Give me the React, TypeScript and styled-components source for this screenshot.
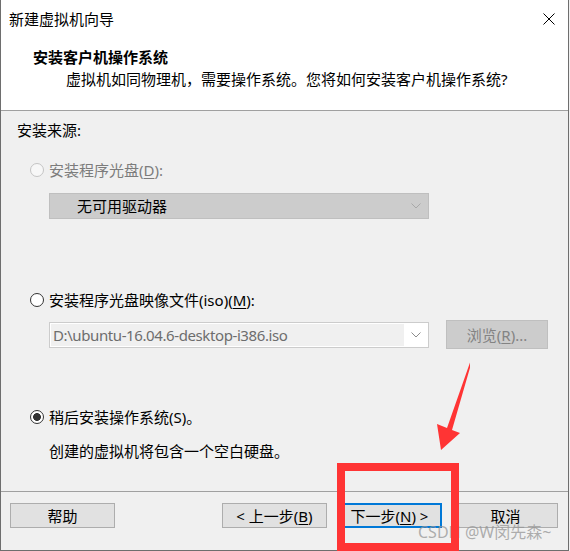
import styled, { createGlobalStyle } from "styled-components";

const GlobalStyle = createGlobalStyle`
  html, body {
    margin: 0;
    padding: 0;
    background: #f0f0f0;
  }
  body {
    font-family: "Noto Sans", "Noto Sans CJK SC", sans-serif;
    font-size: 15px;
    color: #000;
  }
`;

const Chevron = ({ color = "#a8a8a8" }: { color?: string }) => (
  <svg width="10" height="6" viewBox="0 0 10 6">
    <polyline points="0.5,0.5 5,5 9.5,0.5" fill="none" stroke={color} strokeWidth="1" />
  </svg>
);

const CloseIcon = () => (
  <svg width="12" height="12" viewBox="0 0 12 12">
    <line x1="0.5" y1="0.5" x2="11.5" y2="11.5" stroke="#000" strokeWidth="1" />
    <line x1="11.5" y1="0.5" x2="0.5" y2="11.5" stroke="#000" strokeWidth="1" />
  </svg>
);

const App = () => {
  return (
    <>
      <GlobalStyle />
      <Window>
        <Top>
          <TitleBar>
            <span>新建虚拟机向导</span>
            <CloseIcon />
          </TitleBar>
          <HeaderTitle>安装客户机操作系统</HeaderTitle>
          <Subtitle>虚拟机如同物理机，需要操作系统。您将如何安装客户机操作系统?</Subtitle>
        </Top>

        <Body>
          <Line>安装来源:</Line>

          <RadioRow $top={20} $disabled>
            <Radio $disabled />
            <span>
              安装程序光盘(<Key>D</Key>):
            </span>
          </RadioRow>
          <Dropdown>
            <span>无可用驱动器</span>
            <Chevron />
          </Dropdown>

          <RadioRow $top={71}>
            <Radio />
            <span>
              安装程序光盘映像文件(iso)(<Key>M</Key>):
            </span>
          </RadioRow>
          <ComboRow>
            <Combo>
              <ComboField>D:\ubuntu-16.04.6-desktop-i386.iso</ComboField>
              <ComboArrow>
                <Chevron color="#8c8c8c" />
              </ComboArrow>
            </Combo>
            <BrowseButton>
              浏览(<Key>R</Key>)...
            </BrowseButton>
          </ComboRow>

          <RadioRow $top={58}>
            <Radio $checked />
            <span>稍后安装操作系统(S)。</span>
          </RadioRow>
          <Description>创建的虚拟机将包含一个空白硬盘。</Description>
        </Body>

        <Footer>
          <Button>帮助</Button>
          <Spacer />
          <Button $gap={10}>
            &lt; 上一步(<Key>B</Key>)
          </Button>
          <Button $gap={11} $focused>
            下一步(<Key>N</Key>) &gt;
          </Button>
          <Button>取消</Button>
        </Footer>

        {/* 스크린샷 위에 그려진 주석 */}
        <Arrow width="40" height="105" viewBox="0 0 40 105">
          <polygon points="44,4 22,80 30,83 11,100 7,74 17,78 43,4" fill="#ff3434" />
        </Arrow>
        <Watermark>CSDN @W闵先森~</Watermark>
        <RedFrame />
      </Window>
    </>
  );
};

const Window = styled.div`
  position: relative;
  box-sizing: border-box;
  width: 569px;
  height: 551px;
  display: flex;
  flex-direction: column;
  background: #f0f0f0;
  border: 1px solid #6e6e6e;
  border-top: none;
`;

const Top = styled.div`
  flex-shrink: 0;
  height: 110px;
  background: #fff;
  border-bottom: 1px solid #a0a0a0;
`;

const TitleBar = styled.div`
  display: flex;
  align-items: center;
  justify-content: space-between;
  height: 38px;
  padding: 0 13px 0 8px;
  line-height: 20px;
`;

const HeaderTitle = styled.div`
  margin: 9px 0 0 32px;
  line-height: 20px;
  font-weight: bold;
`;

const Subtitle = styled.div`
  margin: 2px 0 0 65px;
  line-height: 20px;
`;

const Body = styled.div`
  flex: 1;
  display: flex;
  flex-direction: column;
  padding: 9px 0 0 16px;
`;

const Line = styled.div`
  line-height: 20px;
`;

const RadioRow = styled.div<{ $top: number; $disabled?: boolean }>`
  display: flex;
  align-items: center;
  gap: 5px;
  height: 20px;
  line-height: 20px;
  margin: ${(p) => p.$top}px 0 0 13px;
  color: ${(p) => (p.$disabled ? "#7c7c7c" : "#000")};
`;

const Radio = styled.span<{ $checked?: boolean; $disabled?: boolean }>`
  box-sizing: border-box;
  width: 14px;
  height: 14px;
  flex-shrink: 0;
  border-radius: 50%;
  border: 1px solid ${(p) => (p.$disabled ? "#c4c4c4" : "#333")};
  background: ${(p) =>
    p.$checked
      ? "radial-gradient(circle, #333 0 3.6px, #fff 4.2px)"
      : p.$disabled
      ? "#f7f7f7"
      : "#fff"};
`;

const Key = styled.span`
  text-decoration: underline;
  text-underline-offset: 2px;
`;

const Dropdown = styled.div`
  box-sizing: border-box;
  display: flex;
  align-items: center;
  justify-content: space-between;
  width: 380px;
  height: 26px;
  margin: 13px 0 0 32px;
  padding: 0 7px 0 27px;
  background: #cccccc;
  border: 1px solid #bfbfbf;
  line-height: 20px;
`;

const ComboRow = styled.div`
  display: flex;
  align-items: center;
  gap: 17px;
  margin: 10px 0 0 32px;
`;

const Combo = styled.div`
  box-sizing: border-box;
  display: flex;
  width: 380px;
  height: 26px;
  padding: 1px;
  background: #fff;
  border: 1px solid #cccccc;
`;

const ComboField = styled.div`
  flex: 1;
  padding-left: 2px;
  background: #f0f0f0;
  color: #6d6d6d;
  line-height: 22px;
  letter-spacing: -0.4px;
`;

const ComboArrow = styled.div`
  width: 23px;
  display: flex;
  align-items: center;
  justify-content: center;
`;

const BrowseButton = styled.div`
  box-sizing: border-box;
  display: flex;
  align-items: center;
  justify-content: center;
  width: 102px;
  height: 29px;
  background: #cccccc;
  border: 1px solid #bfbfbf;
  color: #838383;
`;

const Description = styled.div`
  margin: 14px 0 0 32px;
  line-height: 20px;
`;

const Footer = styled.div`
  flex-shrink: 0;
  display: flex;
  align-items: flex-start;
  height: 47px;
  padding: 11px 10px 0 9px;
  border-top: 1px solid #a0a0a0;
  box-sizing: content-box;
`;

const Spacer = styled.div`
  flex: 1;
`;

const Button = styled.div<{ $gap?: number; $focused?: boolean }>`
  box-sizing: border-box;
  display: flex;
  align-items: center;
  justify-content: center;
  width: 105px;
  height: 25px;
  margin-right: ${(p) => p.$gap ?? 0}px;
  background: #e1e1e1;
  border: 1px solid ${(p) => (p.$focused ? "#0078d7" : "#adadad")};
  box-shadow: ${(p) => (p.$focused ? "inset 0 0 0 1px #0078d7" : "none")};
  line-height: 20px;
`;

const Arrow = styled.svg`
  position: absolute;
  left: 429px;
  top: 350px;
`;

const RedFrame = styled.div`
  position: absolute;
  left: 336px;
  top: 463px;
  width: 122px;
  height: 88px;
  box-sizing: border-box;
  border: 8px solid #ff3434;
`;

const Watermark = styled.div`
  position: absolute;
  left: 417px;
  top: 522px;
  font-size: 16px;
  line-height: 20px;
  color: rgba(150, 150, 150, 0.75);
  white-space: nowrap;
`;

export default App;
